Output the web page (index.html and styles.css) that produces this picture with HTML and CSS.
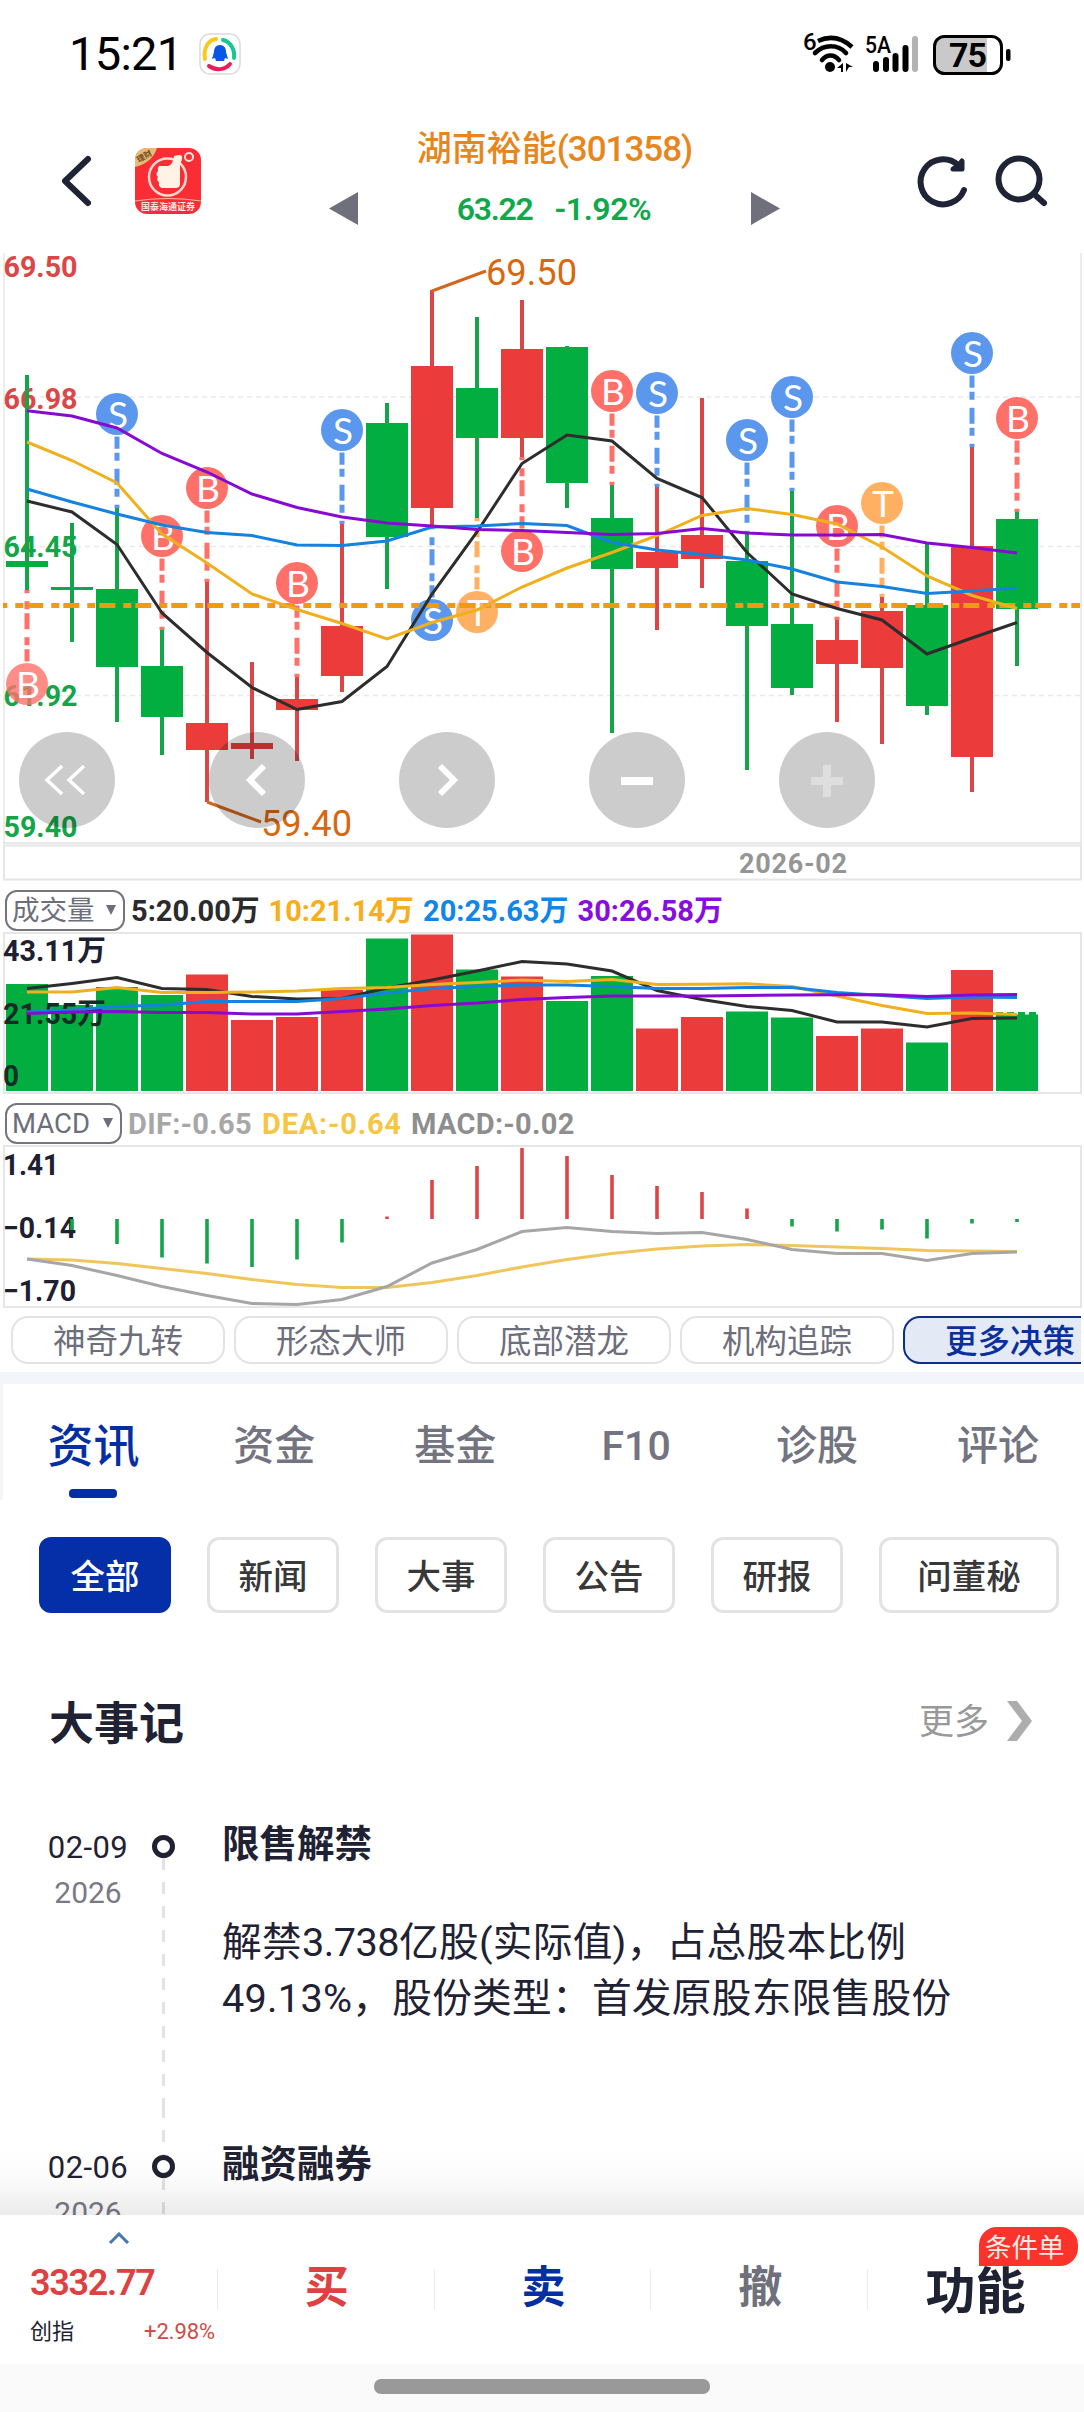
FILE: index.html
```html
<!DOCTYPE html>
<html lang="zh-CN">
<head>
<meta charset="utf-8">
<title>湖南裕能(301358)</title>
<link rel="stylesheet" href="styles.css">
</head>
<body>
<div class="screen">
  <div class="status">
    <span class="clock">15:21</span>
    <svg class="status-app" viewBox="0 0 42 42">
      <rect x="1" y="1" width="40" height="40" rx="10" fill="#fff" stroke="#dcdcdc" stroke-width="1.5"/>
      <g fill="none" stroke-width="4" stroke-linecap="round">
        <path d="M6 26C4 16 9 7 17 6" stroke="#fbc91b"/>
        <path d="M24 7C32 9 36 17 35 25" stroke="#16c795"/>
        <path d="M10 33C17 38 26 37 31 31" stroke="#ea1c5c"/>
      </g>
      <path d="M21 12c4 0 6 3 6 7l2 7-3-1-1 3h-8l-1-3-3 1 2-7c0-4 2-7 6-7z" fill="#0b57e3"/>
    </svg>
    <svg class="status-right" viewBox="800 26 214 52">
      <text x="803" y="50" font-size="24" font-weight="500" textLength="11">6</text>
      <g fill="none" stroke="#000" stroke-width="4.6" stroke-linecap="butt">
        <path d="M818 41C831 35 842 38 852 47"/>
        <path d="M815 53C824 44 838 44 846 53" stroke-linecap="round"/>
        <path d="M822 60C827 54 834 54 839 60" stroke-linecap="round"/>
      </g>
      <circle cx="830" cy="67" r="5"/>
      <path d="M837 68l6-5v9h-2v-4zM846 63l7 4h-4l-3 5z"/>
      <text x="865" y="53" font-size="24" font-weight="500" textLength="26" lengthAdjust="spacingAndGlyphs">5A</text>
      <g stroke="#000" stroke-width="6" stroke-linecap="round">
        <path d="M876 64v5M886 60v9M895.500 56v13M905.500 48v21"/>
        <path d="M915 39v30" stroke="#b3b3b3"/>
      </g>
      <path d="M945 37h42v36h-42a9 9 0 0 1-9-9V46a9 9 0 0 1 9-9z" fill="#c9c9c9"/>
      <rect x="934.500" y="36.500" width="67" height="37" rx="10" fill="none" stroke="#000" stroke-width="3"/>
      <rect x="1006" y="49" width="4.500" height="12" rx="2"/>
      <text x="949" y="67" font-size="34" font-weight="700" textLength="38">75</text>
    </svg>
  </div>

  <header class="top">
    <svg class="back" viewBox="0 0 34 54"><path d="M28 5L5 27L28 49" fill="none" stroke="#1f2336" stroke-width="6" stroke-linecap="round" stroke-linejoin="round"/></svg>
    <svg class="broker" viewBox="0 0 66 66">
      <defs><clipPath id="logo"><rect width="66" height="66" rx="12"/></clipPath></defs>
      <g clip-path="url(#logo)">
        <rect width="66" height="66" fill="#f92d33"/>
        <path d="M0 0h22C19 10 10 17 0 19z" fill="#e4bd78"/>
        <text x="2" y="12" font-size="8" font-weight="700" fill="#7b4a20" transform="rotate(-30 8 10)">理财</text>
        <circle cx="32.500" cy="29" r="18.500" fill="none" stroke="#ffd9cf" stroke-width="2.500"/>
        <path d="M24 18h9q5-1 6-10l5-1c5 0 3 5 1 10v19q0 4-5 4H27q-4-1-3-6-3-2-1-5-3-3 0-6-1-3 1-5z" fill="#fff3e7"/>
        <circle cx="54" cy="9" r="4" fill="none" stroke="#ffe3da" stroke-width="2"/>
        <path d="M0 53q33-5 66 0" fill="none" stroke="#ffb6a8" stroke-width="1"/>
        <text x="6" y="62" font-size="9" font-weight="700" fill="#ffe9e4">国泰海通证券</text>
      </g>
    </svg>
    <svg class="prev" viewBox="0 0 30 34"><path d="M0 17L30 0v34z" fill="#6f707c"/></svg>
    <div class="stock">
      <div class="name">湖南裕能<span>(301358)</span></div>
      <div class="quote"><span class="price">63.22</span><span class="pct">-1.92%</span></div>
    </div>
    <svg class="next" viewBox="0 0 30 34"><path d="M30 17L0 0v34z" fill="#6f707c"/></svg>
    <svg class="tools" viewBox="912 150 140 64" fill="none" stroke="#1f2336" stroke-width="6" stroke-linecap="round" stroke-linejoin="round">
      <path d="M964 190A22.500 22.500 0 1 1 958 165"/>
      <path d="M962 161v8h-9l6-4z" fill="#1f2336" stroke-width="5"/>
      <circle cx="1019" cy="179" r="20.500"/><path d="M1034 194L1044 203"/>
    </svg>
  </header>

  <section class="kline">
    <svg id="kline" viewBox="0 253 1084 629"></svg>
    <div class="controls">
      <button><svg viewBox="0 0 96 96"><path d="M43 34L28 48l15 14M65 34L50 48l15 14" stroke-width="3.500"/></svg></button>
      <button><svg viewBox="0 0 96 96"><path d="M55 34L41 48l14 14" stroke-width="6"/></svg></button>
      <button><svg viewBox="0 0 96 96"><path d="M41 34l14 14-14 14" stroke-width="6"/></svg></button>
      <button><svg viewBox="0 0 96 96"><path d="M32 49h32" stroke-width="8"/></svg></button>
      <button class="off"><svg viewBox="0 0 96 96"><path d="M32 49h32M48 33v32" stroke-width="8"/></svg></button>
    </div>
  </section>

  <div class="indicator vol-head">
    <span class="picker">成交量<i></i></span>
    <span class="c-black">5:20.00万</span><span class="c-gold">10:21.14万</span><span class="c-blue">20:25.63万</span><span class="c-purple">30:26.58万</span>
  </div>
  <svg class="plot" id="volume" viewBox="0 932 1084 163" height="163"></svg>

  <div class="indicator macd-head">
    <span class="picker">MACD<i></i></span>
    <span class="c-gray">DIF:-0.65</span><span class="c-yellow">DEA:-0.64</span><span class="c-dim">MACD:-0.02</span>
  </div>
  <svg class="plot" id="macd" viewBox="0 1145 1084 164" height="164"></svg>

  <div class="strategies">
    <span>神奇九转</span><span>形态大师</span><span>底部潜龙</span><span>机构追踪</span><span class="more">更多决策</span>
  </div>

  <nav class="tabs">
    <a class="on">资讯</a><a>资金</a><a>基金</a><a>F10</a><a>诊股</a><a>评论</a>
  </nav>

  <div class="filters">
    <span class="on">全部</span><span>新闻</span><span>大事</span><span>公告</span><span>研报</span><span class="wide">问董秘</span>
  </div>

  <section class="events">
    <div class="events-head">
      <h2>大事记</h2>
      <span class="all">更多<svg viewBox="0 0 26 42"><path d="M1 1h10l15 20-15 20H1l15-20z" fill="#adadad"/></svg></span>
    </div>
    <article class="event first">
      <div class="date"><b>02-09</b><span>2026</span></div>
      <div class="rail"><i></i></div>
      <div class="body">
        <h3>限售解禁</h3>
        <p>解禁<span class="num">3.738</span>亿股(实际值)，占总股本比例<br>49.13%，股份类型：首发原股东限售股份</p>
      </div>
    </article>
    <article class="event">
      <div class="date"><b>02-06</b><span>2026</span></div>
      <div class="rail"><i></i></div>
      <div class="body"><h3>融资融券</h3></div>
    </article>
  </section>

  <footer class="trade">
    <div class="index">
      <svg viewBox="0 0 22 13"><path d="M2 11L11 2l9 9" fill="none" stroke="#4b75ae" stroke-width="3"/></svg>
      <strong>3332.77</strong>
      <div class="index-row"><span>创指</span><em>+2.98%</em></div>
    </div>
    <div class="act buy">买</div>
    <div class="act sell">卖</div>
    <div class="act cancel">撤</div>
    <div class="act func">功能<span class="badge">条件单</span></div>
  </footer>
  <div class="home"><i></i></div>
</div>
<script src="chart.js"></script>
</body>
</html>
```
FILE: styles.css
```css
* { box-sizing: border-box; }
body {
  margin: 0;
  background: #fff;
  font-family: Roboto, "Noto Sans CJK SC", sans-serif;
  color: #1f2233;
}
svg { display: block; }
svg text { font-family: Roboto, "Noto Sans CJK SC", sans-serif; }
h2, h3, p { margin: 0; }
.screen { width: 1084px; height: 2412px; overflow: hidden; display: flex; flex-direction: column; }
.screen > * { flex: none; }

.status { height: 110px; display: flex; padding: 26px 70px 0 69px; }
.clock { width: 130px; font-size: 47px; line-height: 56px; font-weight: 450; letter-spacing: -.7px; color: #000; }
.status-app { width: 42px; height: 42px; margin-top: 7px; }
.status-right { width: 214px; height: 52px; margin-left: auto; }

.top { height: 143px; display: flex; align-items: flex-start; padding: 0 32px 0 60px; }
.back { width: 34px; height: 54px; margin-top: 44px; }
.broker { width: 66px; height: 66px; margin: 38px 0 0 41px; }
.prev, .next { width: 29px; height: 33px; margin-top: 82px; }
.prev { margin-left: 128px; }
.stock { width: 393px; text-align: center; white-space: nowrap; padding-top: 16px; }
.name { font-size: 35px; line-height: 48px; font-weight: 500; color: #e8861c; }
.name span { letter-spacing: -1px; }
.quote { display: flex; justify-content: center; gap: 22px; margin: 11px 0 0 -1px; font-size: 32px; line-height: 48px; font-weight: 600; color: #0fa84a; }
.price { letter-spacing: -1.300px; }
.pct { letter-spacing: -.4px; }
.tools { width: 140px; height: 64px; margin: 40px 0 0 auto; }

.kline { position: relative; height: 629px; }
.kline > svg, .plot { width: 1084px; display: block; }
.controls { position: absolute; left: 19px; top: 479px; display: flex; gap: 94px; }
.controls button { width: 96px; height: 96px; border: 0; padding: 0; border-radius: 50%; background: rgba(0, 0, 0, .2); }
.controls path { fill: none; stroke: #fff; }
.controls .off path { stroke: #dedede; }

.indicator { height: 50px; display: flex; align-items: center; padding: 6px 0 0 5px; font-size: 29px; font-weight: 700; white-space: nowrap; line-height: 40px; }
.picker { height: 41px; border: 2px solid #74757f; border-radius: 12px; padding: 0 0 0 5px; width: 120px; margin-right: 6px; font-size: 27.500px; line-height: 37px; font-weight: 400; color: #6d6e7b; display: flex; align-items: center; }
.picker i { border: 5.500px solid transparent; border-top: 10px solid #6d6e7b; border-bottom: 0; margin-left: auto; margin-right: 7px; }
.indicator > span + span { padding-top: 2px; }
.vol-head > span + span { width: 142px; margin-right: 12.500px; }
.vol-head > .c-black { width: 125px; }
.macd-head .picker { width: 117px; }
.macd-head > span + span { width: 123px; margin-right: 11px; letter-spacing: .3px; }
.macd-head > .c-yellow { width: 138px; letter-spacing: .8px; }
.macd-head > .c-dim { width: 164px; }
.c-black { color: #2b2b2b; }
.c-gold { color: #f7ae1a; }
.c-blue { color: #0f86ea; }
.c-purple { color: #8a0ddf; }
.c-gray { color: #a7a7a7; }
.c-yellow { color: #f6c544; }
.c-dim { color: #8e8e8e; }

.strategies { width: 1081px; height: 63px; display: flex; gap: 9px; padding: 7px 0 0 11px; overflow: hidden; }
.strategies span { flex: none; width: 214px; height: 48px; border: 2px solid #e2e3e4; border-radius: 17px; text-align: center; font-size: 32.500px; line-height: 48px; color: #6d6e7b; }
.strategies .more { background: #e3eaf6; border-color: #0c3184; color: #0b2f9b; font-weight: 500; }

.tabs { height: 128px; border-top: 12px solid #f4f5fa; border-left: 3px solid #f4f5fa; display: flex; padding-top: 32px; overflow: hidden; }
.tabs a { flex: none; width: 180.900px; text-align: center; font-size: 41px; line-height: 60px; font-weight: 500; color: #73747f; }
.tabs a.on { font-size: 46px; font-weight: 500; color: #042fa3; }
.tabs a.on::after { content: ""; display: block; width: 48px; height: 9px; margin: 13px auto 0; border-radius: 4px; background: #042fa3; }

.filters { display: flex; gap: 36px; padding: 37px 0 0 39px; }
.filters span { width: 132px; height: 76px; border: 3px solid #e3e3e3; border-radius: 12px; text-align: center; font-size: 34.500px; line-height: 74px; font-weight: 500; color: #383838; }
.filters .wide { width: 180px; }
.filters .on { background: #042fa8; border-color: #042fa8; color: #fff; }

.events { height: 602px; overflow: hidden; position: relative; }
.events::after { content: ""; position: absolute; left: 0; right: 0; bottom: 0; height: 70px; background: linear-gradient(rgba(0, 0, 0, 0), rgba(0, 0, 0, .015) 50%, rgba(0, 0, 0, .08)); }
.events-head { height: 173px; display: flex; justify-content: space-between; padding: 80px 52px 0 49px; }
.events-head h2 { font-size: 45px; line-height: 64px; font-weight: 700; }
.all { display: flex; gap: 17px; font-size: 35px; line-height: 60px; color: #999; }
.all svg { width: 26px; height: 42px; margin-top: 7px; }
.event { height: 320px; display: grid; grid-template-columns: 152px 23px 1fr; }
.date { padding: 43px 0 0 24px; text-align: center; display: flex; flex-direction: column; font-size: 31px; line-height: 38px; }
.date b { font-weight: 400; letter-spacing: .4px; }
.date span { margin-top: 7px; color: #797a86; font-size: 30px; }
.rail { background: repeating-linear-gradient(#e2e2e2 0 12px, transparent 12px 24px) 10px 0 / 3px 100% no-repeat; }
.first .rail { background-position: 10px 72px; }
.rail i { display: block; width: 23px; height: 23px; margin-top: 49px; border: 5.500px solid #1f2233; border-radius: 50%; background: #fff; }
.body { padding: 29px 0 0 47px; }
.body h3 { font-size: 37.500px; line-height: 58px; font-weight: 700; }
.body p { margin-top: 42px; font-size: 39.700px; line-height: 56px; letter-spacing: .25px; white-space: nowrap; }
.num { letter-spacing: -.5px; }

.trade { height: 149px; display: grid; grid-template-columns: repeat(5, 1fr); }
.index { padding: 17px 0 0 30px; }
.index svg { width: 22px; height: 13px; margin-left: 78px; }
.index strong { display: block; margin-top: 17px; font-size: 36px; line-height: 42px; font-weight: 600; letter-spacing: -1.300px; color: #dd4141; }
.index-row { display: flex; justify-content: space-between; width: 185px; margin-top: 12px; font-size: 22px; line-height: 32px; }
.index-row em { font-style: normal; color: #d24b46; letter-spacing: -.1px; }
.act { position: relative; text-align: center; font-size: 44px; font-weight: 700; line-height: 60px; padding: 43px 0 0 3px; background: linear-gradient(#ececec, #ececec) 0 54px / 1px 41px no-repeat; }
.buy { color: #dd4141; }
.sell { color: #042fa3; }
.cancel { color: #6f707c; }
.func { font-size: 50px; padding: 47px 0 0; }
.badge { position: absolute; left: 112px; top: 12px; width: 99px; height: 39px; border-radius: 18px 18px 18px 0; background: #fa342b; color: #ffe8e4; font-size: 26.500px; line-height: 42px; font-weight: 400; padding-right: 8px; }
.home { height: 48px; background: #fafafa; padding-top: 15px; }
.home i { display: block; width: 336px; height: 15px; margin: 0 auto; border-radius: 7px; background: #999; }
```
FILE: chart.js
```javascript
const RED = '#eb3b3b', GREEN = '#02ae40';
const RED_LINE = '#dc4646', GREEN_LINE = '#14a548';
const x = i => 27 + 45 * i;

// [colour, high, body top, body bottom, low]
const candles = [
  ['G', 375, 561, 567, 590], ['G', 523, 587, 590, 642], ['G', 508, 589, 667, 722],
  ['G', 630, 666, 717, 755], ['R', 582, 723, 750, 802], ['R', 662, 743, 749, 759],
  ['R', 677, 699, 710, 761], ['R', 524, 626, 676, 692], ['G', 403, 423, 537, 589],
  ['R', 290, 366, 508, 526], ['G', 317, 388, 438, 518], ['R', 300, 349, 438, 457],
  ['G', 346, 347, 483, 508], ['G', 485, 518, 569, 733], ['R', 487, 552, 568, 630],
  ['R', 398, 535, 559, 588], ['G', 534, 561, 626, 770], ['G', 491, 624, 688, 695],
  ['R', 620, 640, 664, 722], ['R', 597, 611, 668, 744], ['G', 543, 605, 706, 715],
  ['R', 447, 546, 757, 792], ['G', 512, 519, 609, 666]
];

// [index, letter, placed below the candle]
const signals = [
  [0, 'B', 1], [2, 'S'], [3, 'B'], [4, 'B'], [6, 'B'], [7, 'S'], [9, 'S', 1], [10, 'T', 1],
  [11, 'B', 1], [13, 'B'], [14, 'S'], [16, 'S'], [17, 'S'], [18, 'B'], [19, 'T'], [21, 'S'], [22, 'B']
];
const signalColor = { B: '#ff7069', S: '#5b97ec', T: '#ffb062' };

const ma = {
  '#2d2d2d': [501, 512, 544.5, 613, 652.5, 687.5, 709.5, 701.5, 666.5, 594, 532, 463.5, 435, 441, 478.5, 497.5, 552.5, 594, 608.5, 620, 654, 638, 622.5],
  '#f0b01e': [442, 460.5, 483, 534, 563, 594, 609.5, 623.5, 639, 622.5, 610, 587, 568, 552.5, 535.5, 515.5, 508.5, 514.5, 524, 547, 576, 595.5, 608.5],
  '#1482de': [489, 502, 514, 525, 532.5, 535.5, 545, 545.5, 541, 527, 526, 523.5, 525.5, 542.5, 550, 554.5, 560, 569, 582, 586.5, 593.5, 591, 588],
  '#860ad2': [410.7, 416, 428, 453.5, 472, 494, 507.5, 517, 523, 526, 529.5, 530.5, 532.5, 534.5, 533.5, 528.5, 533, 535, 535, 534.5, 543, 547.5, 553]
};

const volume = [984, 1005, 987, 995, 974.5, 1020, 1017, 990, 938.5, 934.5, 969.5, 976.5, 1001, 976, 1028.5, 1017, 1011.5, 1017.5, 1036, 1028.5, 1042.5, 970, 1014.5];
const volumeMa = {
  '#2d2d2d': [988.5, 983.5, 977.5, 988.5, 989.5, 996.5, 999, 998.5, 988, 980, 971, 961.5, 964, 971, 990.5, 999.5, 1006.5, 1010.5, 1022, 1022, 1027, 1018.5, 1018],
  '#f0b01e': [992, 992, 987.5, 992.5, 992.5, 992, 991, 988.5, 987.5, 984.5, 982.5, 980, 981.5, 979.5, 984.5, 984.3, 983.7, 986.5, 996, 1005.5, 1013.5, 1013, 1014.5],
  '#1482de': [1012, 1010, 1006.5, 1005, 1001.5, 1001.5, 1001.5, 998.5, 993, 988.5, 986.5, 985, 985, 986.5, 988.5, 988.5, 987.5, 987.5, 992.5, 995.5, 998.5, 997, 997.5],
  '#860ad2': [1013.5, 1012, 1011.5, 1012.5, 1012.5, 1014, 1014, 1011.5, 1009, 1005.5, 1003, 999.5, 997.5, 996, 996, 996, 995.5, 995, 994.7, 994.7, 996.5, 995, 994.5]
};

const macdBars = [null, 1230, 1244, 1257.5, 1263.5, 1267, 1259.5, 1242.5, 1216.5, 1180, 1166, 1148, 1156, 1175, 1186, 1192, 1208.5, 1226.5, 1231.5, 1229.5, 1238.5, 1223.5, 1222];
const macdLines = {
  '#f0c65c': [1259, 1260, 1263.5, 1268.5, 1273.5, 1279.5, 1284.5, 1287.5, 1287.5, 1282.5, 1275.5, 1267, 1259.5, 1253.5, 1249, 1246, 1244.5, 1245.5, 1247, 1248.5, 1250.5, 1251, 1251.5],
  '#a6a6a6': [1259, 1265.5, 1275.5, 1286.5, 1295.5, 1303.5, 1304.5, 1299.5, 1286.5, 1263, 1249.5, 1231.5, 1227.5, 1231.5, 1233.5, 1232.5, 1239.5, 1249.5, 1253.5, 1253.5, 1260.5, 1253.5, 1252]
};

const fill = c => (c === 'R' ? RED : GREEN);
const stroke = c => (c === 'R' ? RED_LINE : GREEN_LINE);
const seg = (x1, y1, x2, y2, color, w, extra = '') =>
  `<line x1="${x1}" y1="${y1}" x2="${x2}" y2="${y2}" stroke="${color}" stroke-width="${w}" ${extra}/>`;
const rect = (left, top, w, h, color) => `<rect x="${left}" y="${top}" width="${w}" height="${h}" fill="${color}"/>`;
const label = (left, y, text, color, length, size = 29, weight = 700) =>
  `<text x="${left}" y="${y}" font-size="${size}" font-weight="${weight}" fill="${color}" textLength="${length}" lengthAdjust="spacingAndGlyphs">${text}</text>`;
const frame = (top, h) => `<rect x="4" y="${top}" width="1077" height="${h}" fill="none" stroke="#e6e6e6" stroke-width="2"/>`;
const lines = (set, w) => Object.entries(set).map(([color, ys]) =>
  `<polyline points="${ys.map((y, i) => x(i) + ',' + y).join(' ')}" fill="none" stroke="${color}" stroke-width="${w}"/>`).join('');

function drawKline() {
  let out = seg(4, 253, 4, 844, '#ececec', 2) + seg(1081, 253, 1081, 844, '#ececec', 2) + seg(3, 843, 1082, 843, '#e2e2e2', 1.5);
  out += frame(845.5, 34);
  [397, 546.5, 695.5].forEach(y => { out += seg(4, y, 1080, y, '#e9e9e9', 1.3, 'stroke-dasharray="5 4"'); });
  [['69.50', 276.5, RED_LINE], ['66.98', 408.5, RED_LINE], ['64.45', 556.5, GREEN_LINE], ['61.92', 705.5, GREEN_LINE], ['59.40', 836.5, GREEN_LINE]]
    .forEach(([t, y, c]) => { out += label(3.5, y, t, c, 74); });
  out += `<text x="739" y="873" font-size="27" font-weight="700" fill="#959595" textLength="108">2026-02</text>`;
  candles.forEach(([c, high, top, bottom, low], i) => {
    out += seg(x(i), high, x(i), low, stroke(c), 4) + rect(x(i) - 21, top, 42, bottom - top, fill(c));
  });
  signals.forEach(([i, letter, below]) => {
    const dir = below ? 1 : -1;
    const tip = below ? candles[i][4] : candles[i][1];
    const cy = tip + dir * 94;
    out += seg(x(i), cy - dir * 22.5, x(i), tip, signalColor[letter], 5, 'stroke-dasharray="16 4 8 8" stroke-dashoffset="3.8"');
    out += `<circle cx="${x(i)}" cy="${cy}" r="21" fill="${signalColor[letter]}" fill-opacity="${i ? 1 : .8}"/>`;
    out += `<text x="${x(i) + 1}" y="${cy + 14}" font-size="37" text-anchor="middle" fill="#fff" style="font-family:Lato,sans-serif">${letter}</text>`;
  });
  out += seg(3, 605.5, 1080, 605.5, '#f09a14', 5, 'stroke-dasharray="16 8 8 4" stroke-dashoffset="11.7"');
  out += lines(ma, 3);
  out += seg(432, 291, 486, 271, '#d0671c', 3) + label(486, 285, '69.50', '#d9670f', 91, 37, 400);
  out += seg(207, 802, 261, 822, '#d0671c', 3) + label(261, 835.5, '59.40', '#d9670f', 91, 37, 400);
  document.getElementById('kline').innerHTML = out;
}

function drawVolume() {
  let out = frame(933, 160);
  volume.forEach((top, i) => { out += rect(x(i) - 21, top, 42, 1091 - top, fill(candles[i][0])); });
  out += seg(x(22) - 21, 1013.5, x(22) + 21, 1013.5, GREEN, 3, 'stroke-dasharray="7 4"');
  out += label(3, 961, '43.11万', '#1d2030', 103) + label(3, 1024, '21.55万', '#152b28', 103) + label(3, 1086, '0', '#12302a', 16);
  document.getElementById('volume').innerHTML = out + lines(volumeMa, 3);
}

function drawMacd() {
  let out = frame(1146, 161);
  out += label(3, 1175, '1.41', '#1d2030', 56) + label(3, 1238, '−0.14', '#1d2030', 73) + label(3, 1301, '−1.70', '#1d2030', 73);
  macdBars.forEach((y, i) => {
    if (y !== null) out += seg(x(i), 1219, x(i), y, y < 1219 ? RED_LINE : GREEN_LINE, 3.6);
  });
  document.getElementById('macd').innerHTML = out + lines(macdLines, 3);
}

drawKline();
drawVolume();
drawMacd();
```
